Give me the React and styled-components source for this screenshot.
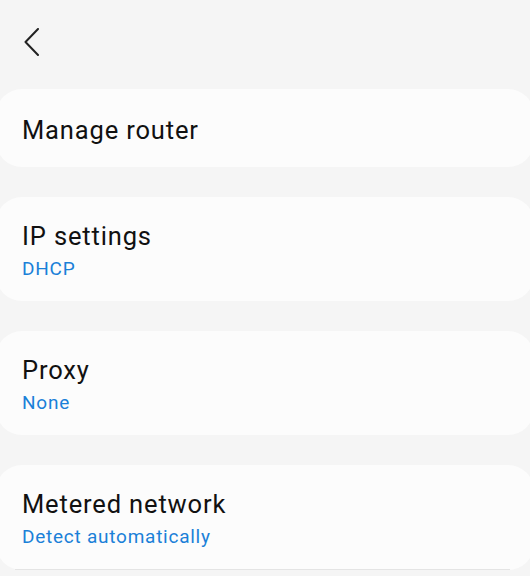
import React from "react";
import styled, { createGlobalStyle } from "styled-components";

const GlobalStyle = createGlobalStyle`
  html, body {
    margin: 0;
    padding: 0;
    background: #f5f5f5;
    overflow: hidden;
  }
  body {
    font-family: Roboto, "Noto Sans", Arial, sans-serif;
  }
`;

const items = [
  { title: "Manage router" },
  { title: "IP settings", value: "DHCP" },
  { title: "Proxy", value: "None" },
  { title: "Metered network", value: "Detect automatically", divider: true },
];

class App extends React.Component {
  render() {
    return (
      <Page>
        <GlobalStyle />
        <Header>
          <BackButton aria-label="Back">
            <svg width="16" height="28" viewBox="0 0 16 28" fill="none">
              <polyline
                points="14,1 1.5,14 14,27"
                stroke="#222"
                strokeWidth="2"
                strokeLinecap="round"
                strokeLinejoin="round"
              />
            </svg>
          </BackButton>
        </Header>
        <List>
          {items.map(item => (
            <Card key={item.title}>
              <Row>
                <Title>{item.title}</Title>
                {item.value && <Value>{item.value}</Value>}
              </Row>
              {item.divider && <Divider />}
            </Card>
          ))}
        </List>
      </Page>
    );
  }
}

const Page = styled.div`
  width: 530px;
  height: 576px;
  overflow: hidden;
  background: #f5f5f5;
`;

const Header = styled.div`
  height: 89px;
  display: flex;
  align-items: flex-start;
  padding: 28px 0 0 24px;
  box-sizing: border-box;
`;

const BackButton = styled.div`
  width: 16px;
  height: 28px;
  display: flex;
`;

const List = styled.div`
  display: flex;
  flex-direction: column;
  gap: 30px;
`;

const Card = styled.div`
  margin: 0 -4px;
  background: #fcfcfc;
  border-radius: 26px;
  min-height: 78px;
`;

const Row = styled.div`
  display: flex;
  flex-direction: column;
  justify-content: center;
  padding: 23px 26px 19px;
  min-height: 78px;
  box-sizing: border-box;
`;

const Title = styled.div`
  font-size: 25.5px;
  line-height: 32px;
  letter-spacing: 0.85px;
  color: #111;
`;

const Value = styled.div`
  font-size: 19px;
  line-height: 26px;
  letter-spacing: 0.75px;
  margin-top: 4px;
  color: #1a80d8;
`;

const Divider = styled.div`
  height: 1px;
  margin: 0 24px 0 19px;
  background: #e4e4e4;
`;

export default App;
